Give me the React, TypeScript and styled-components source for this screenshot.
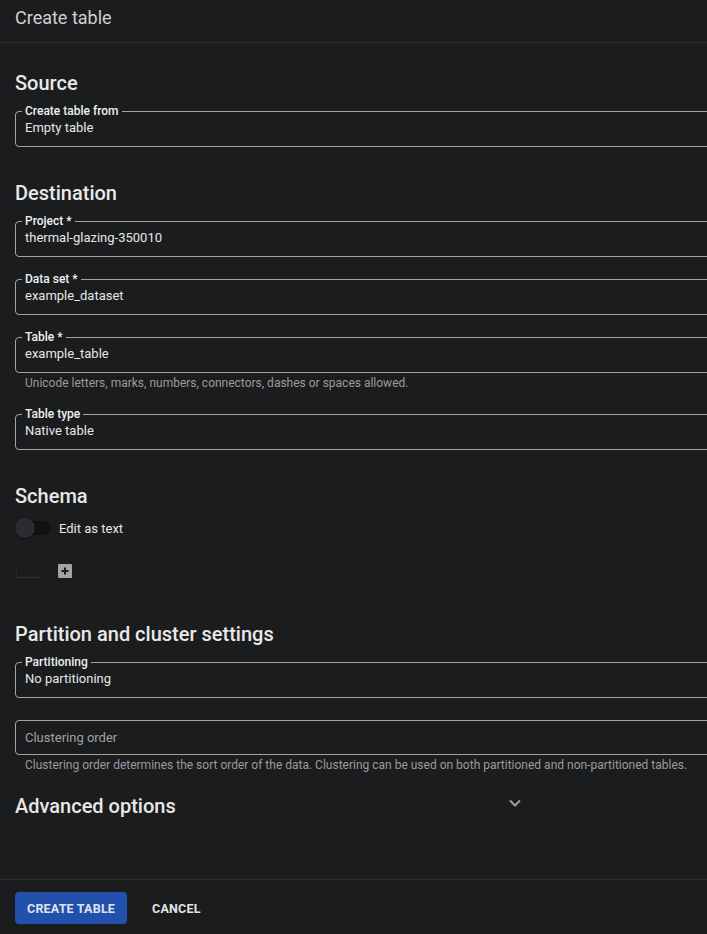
import React from "react";
import styled, { createGlobalStyle } from "styled-components";

const Global = createGlobalStyle`
  html, body { margin: 0; padding: 0; background: #1b1c1e; overflow: hidden; }
  body { font-family: Roboto, "Noto Sans", "Liberation Sans", sans-serif; color: #e3e3e3; }
  * { box-sizing: border-box; }
`;

const Page = styled.div`
  display: flex;
  flex-direction: column;
  min-height: 100vh;
  width: 707px;
  overflow: hidden;
`;

const Header = styled.header`
  height: 43px;
  border-bottom: 1px solid #2c2d30;
  padding: 7px 15px 0;
  font-size: 18px;
  line-height: 22px;
  color: #cfd0d1;
`;

const Content = styled.main`
  flex: 1;
  padding: 28px 0 0 15px;
  display: flex;
  flex-direction: column;
`;

const SectionTitle = styled.h2<{ $top?: number }>`
  margin: ${(p) => p.$top ?? 34}px 0 9px;
  font-size: 20px;
  line-height: 24px;
  font-weight: 500;
  color: #e8e8e8;
`;

const Field = styled.fieldset<{ $gap?: number }>`
  margin: ${(p) => p.$gap ?? 0}px 0 0;
  width: 740px;
  padding: 0 9px;
  border: 1px solid #a9a398;
  border-radius: 4px;
  min-width: 0;
`;

const Legend = styled.legend`
  margin-left: -3px;
  padding: 0 3px;
  font-size: 12px;
  line-height: 14px;
  font-weight: 500;
  color: #eef0f2;
`;

const Value = styled.div<{ $placeholder?: boolean; $plain?: boolean }>`
  padding: ${(p) => (p.$plain ? "8px 0 7px" : "1px 0 9px")};
  font-size: 13px;
  line-height: 18px;
  color: ${(p) => (p.$placeholder ? "#a0a1a3" : "#e6e6e6")};
`;

const Hint = styled.div`
  margin: 3px 0 0 10px;
  font-size: 12px;
  line-height: 14px;
  color: #9a9b9d;
  white-space: nowrap;
`;

const ToggleRow = styled.label`
  margin-top: -1px;
  display: flex;
  align-items: center;
  gap: 8px;
  height: 24px;
  font-size: 13px;
  color: #e6e6e6;
`;

const Track = styled.span`
  position: relative;
  width: 36px;
  height: 14px;
  border-radius: 7px;
  background: #111214;
`;

const Knob = styled.span`
  position: absolute;
  left: 0;
  top: -3px;
  width: 20px;
  height: 20px;
  border-radius: 50%;
  background: #2b2c2f;
  box-shadow: 0 1px 2px rgba(0, 0, 0, 0.5);
`;

const SchemaRow = styled.div`
  margin-top: 24px;
  display: flex;
  align-items: flex-end;
  gap: 18px;
  height: 20px;
`;

const EmptyTable = styled.div`
  margin-left: 1px;
  width: 24px;
  height: 14px;
  border-left: 1px solid #232427;
  border-bottom: 1px solid #303134;
  margin-bottom: 6px;
`;

const PlusBox = styled.span`
  display: inline-flex;
  width: 14px;
  height: 14px;
  margin-bottom: 6px;
  background: #a3a3a3;
  border-radius: 1px;
  align-items: center;
  justify-content: center;
`;

const AdvancedRow = styled.div`
  margin-top: 22px;
  width: 512px;
  display: flex;
  align-items: center;
  justify-content: space-between;
`;

const AdvTitle = styled.h2`
  margin: 0;
  font-size: 20px;
  line-height: 24px;
  font-weight: 500;
  color: #e8e8e8;
`;

const Chevron = styled.svg`
  margin-top: -6px;
`;

const Footer = styled.footer`
  border-top: 1px solid #2c2d30;
  padding: 12px 15px 10px;
  display: flex;
  align-items: center;
  gap: 8px;
`;

const Button = styled.button<{ $primary?: boolean }>`
  height: 32px;
  padding: 0 ${(p) => (p.$primary ? 12 : 17)}px;
  border: none;
  border-radius: 4px;
  background: ${(p) => (p.$primary ? "#2251ad" : "transparent")};
  color: ${(p) => (p.$primary ? "#dfe3ec" : "#e3e3e3")};
  font-family: Roboto, "Liberation Sans", sans-serif;
  font-size: 12.5px;
  font-weight: 700;
  letter-spacing: 0.2px;
  text-transform: uppercase;
`;

type FProps = { label?: string; value: string; placeholder?: boolean; gap?: number };

const FormField = ({ label, value, placeholder, gap }: FProps) => (
  <Field $gap={gap}>
    {label && <Legend>{label}</Legend>}
    <Value $placeholder={placeholder} $plain={!label}>
      {value}
    </Value>
  </Field>
);

export default function App() {
  return (
    <>
      <Global />
      <Page>
        <Header>Create table</Header>
        <Content>
          <SectionTitle $top={0}>Source</SectionTitle>
          <FormField label="Create table from" value="Empty table" />

          <SectionTitle>Destination</SectionTitle>
          <FormField label="Project *" value="thermal-glazing-350010" />
          <FormField label="Data set *" value="example_dataset" gap={15} />
          <FormField label="Table *" value="example_table" gap={15} />
          <Hint>Unicode letters, marks, numbers, connectors, dashes or spaces allowed.</Hint>
          <FormField label="Table type" value="Native table" gap={17} />

          <SectionTitle>Schema</SectionTitle>
          <ToggleRow>
            <Track>
              <Knob />
            </Track>
            Edit as text
          </ToggleRow>
          <SchemaRow>
            <EmptyTable />
            <PlusBox>
              <svg width="10" height="10" viewBox="0 0 10 10">
                <path d="M5 1.5v7M1.5 5h7" stroke="#1b1c1e" strokeWidth="2" />
              </svg>
            </PlusBox>
          </SchemaRow>

          <SectionTitle $top={38}>Partition and cluster settings</SectionTitle>
          <FormField label="Partitioning" value="No partitioning" />
          <FormField value="Clustering order" placeholder gap={22} />
          <Hint>
            Clustering order determines the sort order of the data. Clustering can be used on both
            partitioned and non-partitioned tables.
          </Hint>

          <AdvancedRow>
            <AdvTitle>Advanced options</AdvTitle>
            <Chevron width="24" height="24" viewBox="0 0 24 24">
              <path d="M7 9.5l5 5 5-5" fill="none" stroke="#9e9e9e" strokeWidth="2" />
            </Chevron>
          </AdvancedRow>
        </Content>
        <Footer>
          <Button $primary>Create table</Button>
          <Button>Cancel</Button>
        </Footer>
      </Page>
    </>
  );
}
